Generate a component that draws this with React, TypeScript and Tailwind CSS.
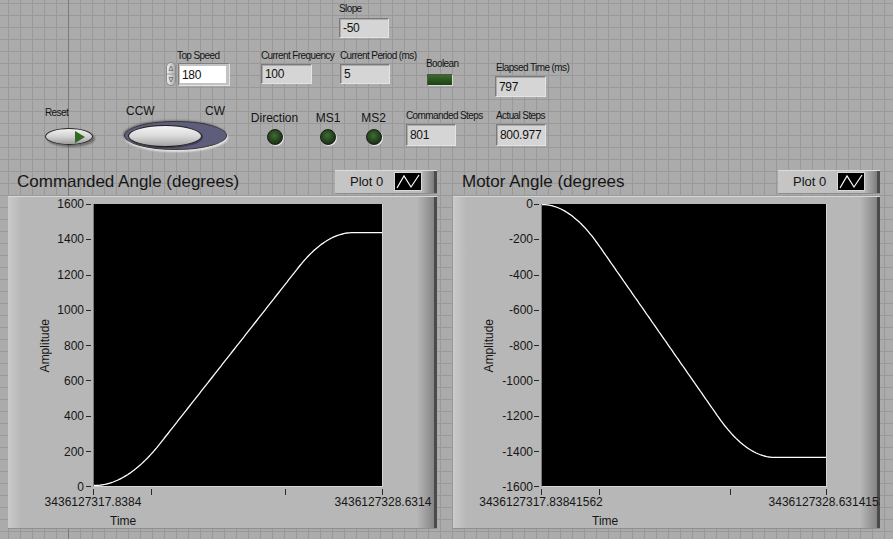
import React from "react";

// trapezoidal velocity profile -> normalized position (0..1)
function profile(u: number, a: number, b: number, c: number) {
  const total = a / 2 + (b - a) + (c - b) / 2;
  let p;
  if (u <= a) p = (u * u) / (2 * a);
  else if (u <= b) p = a / 2 + (u - a);
  else if (u <= c) {
    const t = u - b;
    p = a / 2 + (b - a) + t - (t * t) / (2 * (c - b));
  } else p = total;
  return p / total;
}

function curve(w: number, h: number, a: number, b: number, c: number, up: boolean) {
  const pts: string[] = [];
  for (let i = 0; i <= 240; i++) {
    const u = i / 240;
    const v = profile(u, a, b, c) * 0.9 * (h - 1);
    const y = up ? h - 0.5 - v : 0.5 + v;
    pts.push(`${(u * w).toFixed(1)},${y.toFixed(1)}`);
  }
  return pts.join(" ");
}

const Label = ({ children, className = "" }: { children: React.ReactNode; className?: string }) => (
  <div className={`text-[10px] leading-[12px] tracking-[-0.6px] text-[#141414] whitespace-nowrap ${className}`}>
    {children}
  </div>
);

const Indicator = ({ value, className = "" }: { value: string; className?: string }) => (
  <div
    className={`flex items-center bg-[#d5d5d5] border border-t-[#7a7a7a] border-l-[#7a7a7a] border-b-[#e4e4e4] border-r-[#e4e4e4] shadow-[inset_1px_1px_0_#ababab] pl-[3px] text-[12px] tracking-[-0.3px] text-[#111] ${className}`}
  >
    {value}
  </div>
);

const Led = () => (
  <div className="w-4 h-4 rounded-full border border-[#1c1c1c] bg-[radial-gradient(circle_at_45%_40%,#416d35,#21401b_55%,#10240c)] shadow-[1px_1px_0_#e2e2e2]" />
);

const Spinner = () => (
  <svg width="10" height="24" viewBox="0 0 10 24">
    <defs>
      <linearGradient id="sp" x1="0" x2="1">
        <stop offset="0" stopColor="#f0f0f0" />
        <stop offset="1" stopColor="#a8a8a8" />
      </linearGradient>
    </defs>
    <rect x="0.5" y="0.5" width="9" height="23" rx="4.5" fill="url(#sp)" stroke="#8a8a8a" />
    <line x1="1" y1="12" x2="9" y2="12" stroke="#9a9a9a" />
    <path d="M3 8.5 L5 4 L7 8.5 Z" fill="none" stroke="#6a6a6a" strokeWidth="0.8" />
    <path d="M3 15.5 L5 20 L7 15.5 Z" fill="none" stroke="#6a6a6a" strokeWidth="0.8" />
  </svg>
);

const Legend = () => (
  <div className="w-[102px] h-[24px] flex items-center pl-[15px] border-b border-[#8c8c8c] bg-[linear-gradient(to_right,#c6c6c6,#bcbcbc_calc(100%_-_16px),#7c7c7c_calc(100%_-_3px),#4c4c4c_calc(100%_-_3px),#4c4c4c)] shadow-[inset_0_1px_0_#dcdcdc]">
    <span className="text-[13px] leading-[16px] text-[#141414]">Plot 0</span>
    <div className="ml-[11px] w-[28px] h-[19px] bg-black border border-[#d8d8d8]">
      <svg width="26" height="17" viewBox="0 0 26 17">
        <polyline points="2,15 9,3 16,14 24,2" fill="none" stroke="#fff" strokeWidth="1.2" />
      </svg>
    </div>
  </div>
);

type ChartProps = {
  title: string;
  width: string;
  yLabels: string[];
  up: boolean;
  plotW: number;
  prof: [number, number, number];
  ticks: number[];
  xLeft: string;
  xRight: string;
  padL: string;
  labelsW: string;
  tickML: string;
  tickColW: string;
  timeML: string;
  plotClass: string;
};

const Chart = (p: ChartProps) => {
  const plotH = 283;
  const innerW = p.plotW - 2;
  const innerH = plotH - 1;
  return (
    <div className={p.width}>
      <div className="h-[24px] flex items-center justify-between">
        <span className="pl-[9px] text-[17px] leading-[20px] text-[#161616]">{p.title}</span>
        <Legend />
      </div>
      <div className="mt-[2px] h-[333px] overflow-hidden flex pt-[8px] border-b border-[#8e8e8e] shadow-[inset_0_1px_0_#d8d8d8] bg-[linear-gradient(to_right,#cacaca,#b7b7b7_14px,#b7b7b7_calc(100%_-_20px),#858585_calc(100%_-_3px),#4a4a4a_calc(100%_-_3px),#4a4a4a)]">
        <div className={`flex shrink-0 ${p.padL}`}>
          <div className="w-[12px] h-[283px] flex items-center justify-center">
            <span className="[writing-mode:vertical-rl] rotate-180 text-[12px] leading-[12px] text-[#161616]">Amplitude</span>
          </div>
          <div className={`${p.labelsW} h-[297px] -mt-[7px] flex flex-col justify-between items-end text-[12px] leading-[14px] text-[#161616]`}>
            {p.yLabels.map((l) => (
              <span key={l}>{l}</span>
            ))}
          </div>
          <div className={`${p.tickColW} h-[283px] flex flex-col justify-between`}>
            {p.yLabels.map((l) => (
              <div key={l} className={`${p.tickML} w-[5px] h-[1px] bg-[#262626]`} />
            ))}
          </div>
        </div>
        <div className="shrink-0">
          <div className={`${p.plotClass} h-[283px] bg-black border-l border-l-[#7a7a7a] border-r border-r-[#d4d4d4] border-b border-b-[#d4d4d4]`}>
            <svg width={innerW} height={innerH} className="block">
              <polyline points={curve(innerW, innerH, p.prof[0], p.prof[1], p.prof[2], p.up)} fill="none" stroke="#fff" strokeWidth="1.3" />
            </svg>
          </div>
          <svg width={p.plotW} height="8" className="block">
            {p.ticks.map((t) => (
              <line key={t} x1={t + 0.5} y1="2" x2={t + 0.5} y2="8" stroke="#2a2a2a" />
            ))}
          </svg>
          <div className="-mx-[70px] flex justify-between text-[12px] leading-[14px] text-[#161616]">
            <span className="w-[140px] text-center">{p.xLeft}</span>
            <span className="w-[140px] text-center whitespace-nowrap">{p.xRight}</span>
          </div>
          <div className={`mt-[5px] ${p.timeML} text-[12px] leading-[14px] text-[#161616]`}>Time</div>
        </div>
      </div>
    </div>
  );
};

export default function App() {
  return (
    <div className="w-[893px] h-[539px] overflow-hidden font-['Liberation_Sans',Arial,sans-serif] text-[#141414] bg-[#ababab] bg-[linear-gradient(to_right,transparent_68px,#7a7a7a_68px,#7a7a7a_69px,transparent_69px),linear-gradient(to_right,#999999_1px,transparent_1px),linear-gradient(to_bottom,#999999_1px,transparent_1px)] bg-[size:100%_100%,12px_12px,12px_12px] bg-[position:0_0,8px_3px,8px_3px]">
      {/* slope */}
      <div className="h-[50px] pl-[339px] pt-[3px]">
        <Label>Slope</Label>
        <Indicator value="-50" className="mt-[3px] w-[50px] h-[20px]" />
      </div>

      {/* row A */}
      <div className="h-[54px] flex items-start">
        <div className="ml-[166px] w-[64px]">
          <Label className="pl-[11px]">Top Speed</Label>
          <div className="flex items-start mt-[0px]">
            <Spinner />
            <div className="ml-[2px] mt-[1px] w-[52px] h-[23px] bg-[#c2c2c2] border border-t-[#7e7e7e] border-l-[#7e7e7e] border-b-[#e2e2e2] border-r-[#e2e2e2] pt-[2px] pb-[2px] pl-[1px] pr-[3px]">
              <div className="h-full bg-white flex items-center pl-[2px] text-[12px] tracking-[-0.3px] text-[#111]">180</div>
            </div>
          </div>
        </div>
        <div className="ml-[31px] w-[72px]">
          <Label>Current Frequency</Label>
          <Indicator value="100" className="mt-[2px] w-[51px] h-[20px]" />
        </div>
        <div className="ml-[7px] w-[76px]">
          <Label>Current Period (ms)</Label>
          <Indicator value="5" className="mt-[2px] w-[50px] h-[20px]" />
        </div>
        <div className="ml-[10px] w-[32px] mt-[8px]">
          <Label>Boolean</Label>
          <div className="mt-[4px] ml-[1px] w-[26px] h-[12px] border border-t-[#505050] border-l-[#505050] border-b-[#dadada] border-r-[#dadada] bg-[linear-gradient(to_bottom,#3b6a2d,#1d4115)]" />
        </div>
        <div className="ml-[38px] mt-[12px]">
          <Label>Elapsed Time (ms)</Label>
          <Indicator value="797" className="mt-[2px] -ml-[1px] w-[51px] h-[21px]" />
        </div>
      </div>

      {/* row B */}
      <div className="h-[66px] flex items-start">
        <div className="ml-[45px] w-[48px] mt-[3px]">
          <Label>Reset</Label>
          <div className="mt-[9px] w-[48px] h-[17px] rounded-[50%] border border-[#2a2a2a] bg-[linear-gradient(to_bottom,#f2f2f2,#cdcdcd_55%,#9c9c9c)] shadow-[2px_2px_2px_rgba(0,0,0,0.35)] flex items-center justify-end pr-[7px]">
            <div className="w-0 h-0 border-y-[6px] border-y-transparent border-l-[10px] border-l-[#2f6b20]" />
          </div>
        </div>
        <div className="ml-[31px] w-[103px]">
          <div className="flex justify-between px-[2px] text-[12px] leading-[14px]">
            <span>CCW</span>
            <span>CW</span>
          </div>
          <div className="mt-[3px] w-[103px] h-[29px] rounded-[50%] border border-[#3a3a3a] bg-[#5f5d7c] shadow-[1px_2px_2px_rgba(255,255,255,0.7),-1px_-1px_2px_rgba(0,0,0,0.3)] flex items-center pl-[3px]">
            <div className="w-[74px] h-[22px] rounded-[50%] border border-[#222] bg-[linear-gradient(to_bottom,#f5f5f5,#d9d9d9_50%,#a4a4a4)] shadow-[1px_1px_1px_rgba(0,0,0,0.4)]" />
          </div>
        </div>
        <div className="ml-[24px] w-[47px] mt-[7px] flex flex-col items-center">
          <span className="text-[12px] leading-[14px] whitespace-nowrap">Direction</span>
          <div className="mt-[4px]"><Led /></div>
        </div>
        <div className="ml-[19px] w-[22px] mt-[7px] flex flex-col items-center">
          <span className="text-[12px] leading-[14px]">MS1</span>
          <div className="mt-[4px]"><Led /></div>
        </div>
        <div className="ml-[23px] w-[23px] mt-[7px] flex flex-col items-center">
          <span className="text-[12px] leading-[14px]">MS2</span>
          <div className="mt-[4px]"><Led /></div>
        </div>
        <div className="ml-[21px] w-[75px] mt-[6px]">
          <Label>Commanded Steps</Label>
          <Indicator value="801" className="mt-[2px] w-[50px] h-[22px]" />
        </div>
        <div className="ml-[15px] w-[50px] mt-[6px]">
          <Label>Actual Steps</Label>
          <Indicator value="800.977" className="mt-[2px] w-[50px] h-[22px]" />
        </div>
      </div>

      {/* charts */}
      <div className="flex items-start">
        <div className="ml-[8px]">
          <Chart
            title="Commanded Angle (degrees)"
            width="w-[429px]"
            yLabels={["1600", "1400", "1200", "1000", "800", "600", "400", "200", "0"]}
            up
            plotW={290}
            plotClass="w-[290px]"
            prof={[0.23, 0.71, 0.9]}
            ticks={[0, 58, 192, 289]}
            xLeft="3436127317.8384"
            xRight="3436127328.6314"
            padL="pl-[31px]"
            labelsW="w-[33px]"
            tickColW="w-[9px]"
            tickML="ml-[2px]"
            timeML="ml-[17px]"
          />
        </div>
        <div className="ml-[16px]">
          <Chart
            title="Motor Angle (degrees"
            width="w-[427px]"
            yLabels={["0", "-200", "-400", "-600", "-800", "-1000", "-1200", "-1400", "-1600"]}
            up={false}
            plotW={286}
            plotClass="w-[286px]"
            prof={[0.2, 0.62, 0.82]}
            ticks={[0, 58, 189, 285]}
            xLeft="3436127317.83841562"
            xRight="3436127328.6314153"
            padL="pl-[30px]"
            labelsW="w-[38px]"
            tickColW="w-[8px]"
            tickML="ml-[1px]"
            timeML="ml-[51px]"
          />
        </div>
      </div>
    </div>
  );
}
